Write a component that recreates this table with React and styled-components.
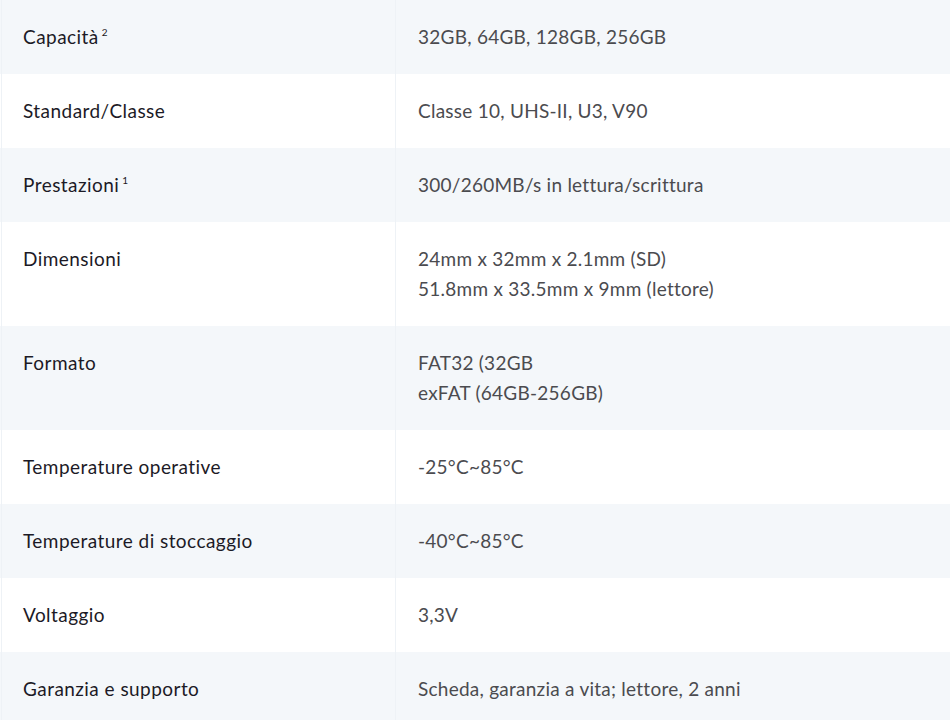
import React from "react";
import styled, { createGlobalStyle } from "styled-components";

const Global = createGlobalStyle`
  html, body { margin: 0; padding: 0; background: #ffffff; }
  body { font-family: Lato, "Open Sans", "Liberation Sans", sans-serif; }
`;

const Table = styled.div`
  display: flex;
  flex-direction: column;
  width: 950px;
`;

const Row = styled.div`
  display: grid;
  grid-template-columns: 395px 1fr;
  background: ${(p) => (p.$striped ? "#f4f7fa" : "#ffffff")};
`;

const Cell = styled.div`
  padding: 22px 0 22px 22px;
  border-left: 1px solid #eef2f6;
  font-size: 19px;
  line-height: 30px;
  color: #4b4b4f;
  font-weight: 400;
  letter-spacing: 0.25px;
`;

const LabelCell = styled(Cell)`
  margin-left: 1px;
  padding-left: 21px;
  color: #1c1a26;
  letter-spacing: 0.45px;
`;

const Sup = styled.sup`
  font-size: 10px;
  line-height: 0;
  margin-left: 3px;
  vertical-align: 8px;
`;

const Line = styled.div``;

const rows = [
  { label: "Capacità", sup: "2", value: ["32GB, 64GB, 128GB, 256GB"] },
  { label: "Standard/Classe", value: ["Classe 10, UHS-II, U3, V90"] },
  { label: "Prestazioni", sup: "1", value: ["300/260MB/s in lettura/scrittura"] },
  {
    label: "Dimensioni",
    value: ["24mm x 32mm x 2.1mm (SD)", "51.8mm x 33.5mm x 9mm (lettore)"],
  },
  { label: "Formato", value: ["FAT32 (32GB", "exFAT (64GB-256GB)"] },
  { label: "Temperature operative", value: ["-25°C~85°C"] },
  { label: "Temperature di stoccaggio", value: ["-40°C~85°C"] },
  { label: "Voltaggio", value: ["3,3V"] },
  { label: "Garanzia e supporto", value: ["Scheda, garanzia a vita; lettore, 2 anni"] },
];

export default function App() {
  return (
    <>
      <Global />
      <Table>
        {rows.map((r, i) => (
          <Row key={r.label} $striped={i % 2 === 0}>
            <LabelCell>
              {r.label}
              {r.sup && <Sup>{r.sup}</Sup>}
            </LabelCell>
            <Cell>
              {r.value.map((v) => (
                <Line key={v}>{v}</Line>
              ))}
            </Cell>
          </Row>
        ))}
      </Table>
    </>
  );
}
